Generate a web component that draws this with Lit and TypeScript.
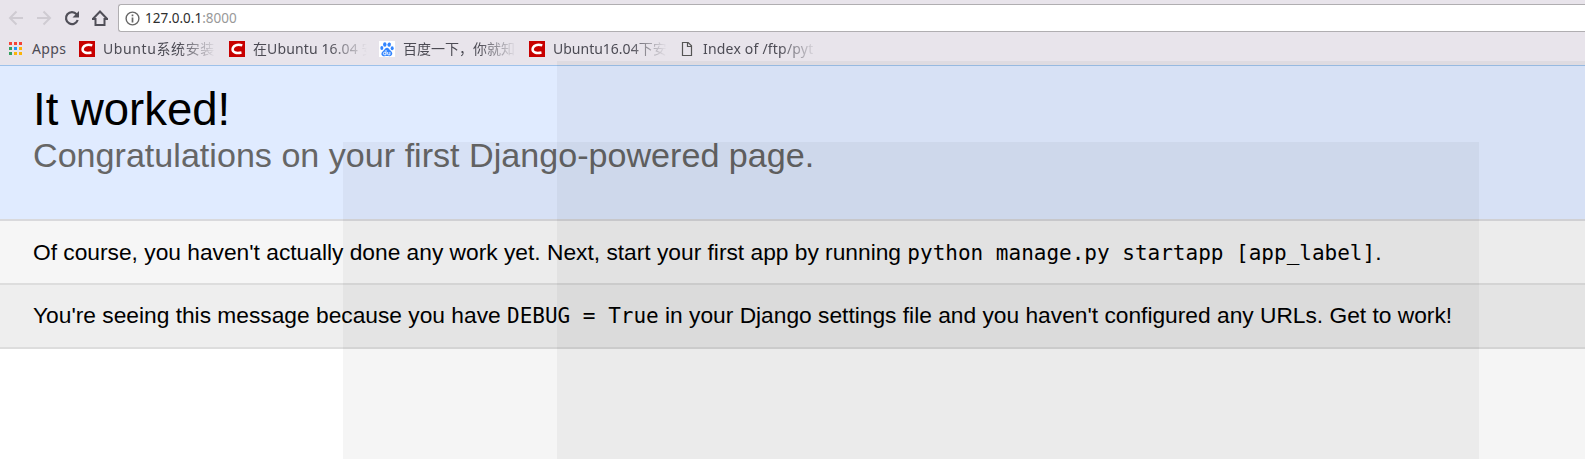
import { LitElement, html, css, svg } from "lit";
import { customElement } from "lit/decorators.js";

const csdn = html`<svg width="16" height="16" viewBox="0 0 16 16"><rect width="16" height="16" fill="#c80000"/><path d="M13.300 4.400C8 2.600 3.900 4.800 3.600 8.200c-.3 3.300 3.700 4.500 8.900 3.300" fill="none" stroke="#fff" stroke-width="2.500"/></svg>`;
const paw = html`<svg width="16" height="16" viewBox="0 0 16 16"><rect width="16" height="16" fill="#fff"/><g fill="#3385ff"><ellipse cx="5.800" cy="3.500" rx="1.700" ry="2.200"/><ellipse cx="10.200" cy="3.600" rx="1.700" ry="2.200" transform="rotate(12 10.200 3.600)"/><ellipse cx="2.800" cy="7" rx="1.500" ry="2"/><ellipse cx="13.200" cy="7.300" rx="1.500" ry="2"/><path d="M8 6.700c1.800 0 2.400 2 4 3.400 2.600 2.400.8 5.300-1.600 5.100-1.600-.2-3.200-.2-4.800 0C2.500 15.500 1.400 12.500 3.600 10.400 5.500 8.900 6.300 6.700 8 6.700z"/></g><path d="M7 9v4.800H5.800a1.300 1.300 0 1 1 1.200-1.400M8.700 11v2.200q0 .6.700.6h1.500V11" fill="none" stroke="#fff" stroke-width=".9"/></svg>`;
const doc = html`<svg width="16" height="16" viewBox="0 0 16 16"><path d="M3.500 1.500h5.700l3.300 3.300v9.700h-9zM8.500 1.500v4h4" fill="none" stroke="#555" stroke-width="1.200"/></svg>`;

const bookmarks = [
  { icon: csdn, cls: "b1", text: "Ubuntu系统安装" },
  { icon: csdn, cls: "b2", text: "在Ubuntu 16.04 安" },
  { icon: paw, cls: "b3", text: "百度一下，你就知" },
  { icon: csdn, cls: "b4", text: "Ubuntu16.04下安" },
  { icon: doc, cls: "b5", text: "Index of /ftp/pyt" },
];
const dots = ["#f44336", "#f44336", "#f44336", "#34a05f", "#2196f3", "#fbb40a", "#34a05f", "#fbb40a", "#fbb40a"];

@customElement("app-root")
export class AppRoot extends LitElement {
  static styles = css`
    :host { display: block; position: relative; height: 459px; overflow: hidden; background: #fff; color: #000; font-family: "Liberation Sans", sans-serif; }
    * { box-sizing: border-box; }
    svg { display: block; flex: none; }
    .chrome { height: 66px; background: #e8e4eb; border-bottom: 1px solid #9dc1ea; font-family: "Noto Sans", "Noto Sans CJK SC", sans-serif; }
    .nav { display: flex; align-items: center; height: 36px; padding-left: 8px; }
    .nav .i { margin-right: 12px; }
    .home { margin-right: 9px; }
    .url { display: flex; align-items: center; flex: 1; height: 28px; border: 1px solid #b0aeb1; border-right: 0; border-radius: 3px 0 0 3px; background: #fff; padding-left: 6px; font-size: 13.500px; color: #2e2e2e; white-space: pre; }
    .url svg { margin-right: 5px; }
    .port { color: #999; }
    .marks { display: flex; height: 25px; align-items: center; padding-left: 9px; font-size: 14px; color: #4c4b54; }
    .apps { margin: 0 13px 0 10px; width: 34px; white-space: nowrap; letter-spacing: .4px; }
    .bm { display: flex; align-items: center; gap: 8px; width: 150px; }
    .t { width: 114px; overflow: hidden; white-space: nowrap; line-height: 24px; -webkit-mask-image: linear-gradient(90deg, #000 76px, transparent 114px); mask-image: linear-gradient(90deg, #000 76px, transparent 114px); }
    .b1 { letter-spacing: .6px; }
    .b2 { letter-spacing: .12px; }
    .b5 { letter-spacing: .2px; }
    .head { height: 155px; padding: 18px 33px 0; background: #e0ebff; border-bottom: 2px solid #d9d9dc; }
    h1, h2, p { margin: 0; font-weight: 400; white-space: nowrap; }
    h1 { font-size: 45.500px; line-height: 52px; margin-bottom: -1px; }
    h2 { font-size: 34.125px; line-height: 40px; color: #666; }
    .row { height: 64px; padding: 0 0 0 33px; background: #f6f6f6; border-bottom: 2px solid #ddd; font-size: 22.750px; line-height: 62px; }
    .row.alt { line-height: 60px; background: #eee; }
    code { font-family: "DejaVu Sans Mono", monospace; font-size: 21px; line-height: 1; }
    .veil { position: absolute; bottom: 0; background: rgba(12, 0, 0, .041); }
    .a { left: 557px; right: 0; top: 61px; }
    .b { left: 343px; width: 1136px; top: 142px; }
  `;
  render() {
    return html`
      <div class="chrome">
        <div class="nav">
          <svg class="i" width="16" height="16" viewBox="0 0 16 16" fill="none" stroke="#cfcbd2" stroke-width="2"><path d="M15 8H2.500M8.500 1.500L2 8l6.500 6.500"/></svg>
          <svg class="i" width="16" height="16" viewBox="0 0 16 16" fill="none" stroke="#cfcbd2" stroke-width="2"><path d="M1 8h12.500M7.500 1.500L14 8l-6.500 6.500"/></svg>
          <svg class="i" width="16" height="16" viewBox="0 0 16 16"><path d="M12.600 4.200A6 6 0 1 0 13.700 10" fill="none" stroke="#504f58" stroke-width="2.200"/><path d="M15 1v6.500H8.500z" fill="#504f58"/></svg>
          <svg class="home" width="17" height="16" viewBox="0 0 17 16" fill="none" stroke="#504f58" stroke-width="2"><path d="M0 9h3.500v6h9V9H16M.8 9L8 1.500 15.200 9"/></svg>
          <div class="url">
            <svg width="15" height="15" viewBox="0 0 15 15" fill="none" stroke="#666" stroke-width="1.400"><circle cx="7.500" cy="7.500" r="6.400"/><path d="M7.500 6.500V11.500M7.500 3.500v1.700" stroke-width="1.700"/></svg>
            <span>127.0.0.1<span class="port">:8000</span></span>
          </div>
        </div>
        <div class="marks">
          <svg width="13" height="13" viewBox="0 0 13 13">${dots.map((c, i) => svg`<rect x=${(i % 3) * 5} y=${Math.floor(i / 3) * 5} width="3" height="3" fill=${c}/>`)}</svg>
          <span class="apps">Apps</span>
          ${bookmarks.map((b) => html`<div class="bm">${b.icon}<span class="t ${b.cls}">${b.text}</span></div>`)}
        </div>
      </div>
      <div class="head"><h1>It worked!</h1><h2>Congratulations on your first Django-powered page.</h2></div>
      <p class="row">Of course, you haven't actually done any work yet. Next, start your first app by running <code>python manage.py startapp [app_label]</code>.</p>
      <p class="row alt">You're seeing this message because you have <code>DEBUG = True</code> in your Django settings file and you haven't configured any URLs. Get to work!</p>
      <div class="veil a"></div><div class="veil b"></div>
    `;
  }
}
